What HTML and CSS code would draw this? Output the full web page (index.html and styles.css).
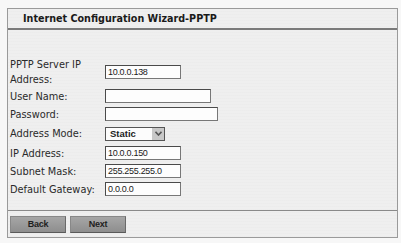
FILE: index.html
```html
<!DOCTYPE html>
<html>
<head>
<meta charset="utf-8">
<link rel="stylesheet" href="styles.css">
</head>
<body>
<div class="page">
  <div class="box">
    <div class="header">Internet Configuration Wizard-PPTP</div>
    <div class="form">
      <div class="row tall">
        <div class="label">PPTP Server IP<br>Address:</div>
        <div class="field"><span class="input w76">10.0.0.138</span></div>
      </div>
      <div class="row">
        <div class="label">User Name:</div>
        <div class="field"><span class="input w106"></span></div>
      </div>
      <div class="row">
        <div class="label">Password:</div>
        <div class="field"><span class="input w113"></span></div>
      </div>
      <div class="row sel">
        <div class="label">Address Mode:</div>
        <div class="field"><span class="select"><span class="sel-text">Static</span><span class="sel-btn"><svg width="7" height="5" viewBox="0 0 7 5"><path d="M0.5 0.8 L3.5 4 L6.5 0.8" fill="none" stroke="#555" stroke-width="1.6"/></svg></span></span></div>
      </div>
      <div class="row">
        <div class="label">IP Address:</div>
        <div class="field"><span class="input w76">10.0.0.150</span></div>
      </div>
      <div class="row">
        <div class="label">Subnet Mask:</div>
        <div class="field"><span class="input w76">255.255.255.0</span></div>
      </div>
      <div class="row">
        <div class="label">Default Gateway:</div>
        <div class="field"><span class="input w76">0.0.0.0</span></div>
      </div>
    </div>
    <div class="footer">
      <span class="btn">Back</span>
      <span class="btn">Next</span>
    </div>
  </div>
</div>
</body>
</html>
```
FILE: styles.css
```css
html, body {
  margin: 0;
  padding: 0;
  background: #f7f7f7;
}
.page {
  padding: 8px 3px 5px 7px;
}
.box {
  width: 389px;
  height: 228px;
  border: 1px solid #9a9a9a;
  background: repeating-linear-gradient(180deg, #efefef 0px, #efefef 2px, #eaeaea 3px);
  display: flex;
  flex-direction: column;
  font-family: "DejaVu Sans", Verdana, sans-serif;
  color: #2a2a2a;
}
.header {
  height: 19px;
  line-height: 20px;
  padding-left: 15px;
  font-weight: bold;
  font-size: 9.6px;
  color: #1a1a1a;
  border-bottom: 2px solid #7a7a7a;
}
.form {
  padding-top: 27px;
  padding-left: 2px;
  flex: 1;
  border-bottom: 1px solid #8a8a8a;
}
.row {
  display: grid;
  grid-template-columns: 95px auto;
  align-items: center;
  height: 18px;
  font-size: 9.8px;
}
.row.tall {
  height: 30px;
}
.row.sel {
  height: 21px;
}
.label {
  line-height: 15px;
  white-space: nowrap;
}
.field {
  display: flex;
  align-items: center;
}
.input {
  display: inline-block;
  box-sizing: border-box;
  height: 14px;
  border: 1px solid #4a4a4a;
  border-right-color: #777;
  border-bottom-color: #777;
  background: #fdfdfd;
  font-family: "Liberation Sans", Arial, sans-serif;
  font-size: 9px;
  letter-spacing: -0.3px;
  line-height: 12px;
  padding-left: 2px;
  color: #1a1a1a;
}
.w76 { width: 76px; }
.w106 { width: 106px; }
.w113 { width: 113px; }
.select {
  display: inline-flex;
  box-sizing: border-box;
  width: 60px;
  height: 14px;
  border: 1px solid #555;
  background: #fcfcfc;
  align-items: center;
  justify-content: space-between;
}
.sel-text {
  font-family: "Liberation Sans", Arial, sans-serif;
  font-weight: bold;
  font-size: 9.5px;
  padding-left: 4px;
  color: #222;
}
.sel-btn {
  width: 12px;
  height: 12px;
  background: #c8c8c8;
  display: flex;
  align-items: center;
  justify-content: center;
}
.footer {
  height: 26px;
  display: flex;
  align-items: flex-start;
  gap: 4px;
  padding-left: 2px;
  padding-top: 5px;
  box-sizing: border-box;
}
.btn {
  box-sizing: border-box;
  width: 56px;
  height: 17px;
  background: linear-gradient(180deg, #a6a6a6, #8e8e8e);
  border: 1px solid #888;
  border-bottom-color: #5a5a5a;
  border-right-color: #6a6a6a;
  text-align: center;
  font-family: "Liberation Sans", Arial, sans-serif;
  font-weight: bold;
  font-size: 9px;
  line-height: 15px;
  letter-spacing: -0.3px;
  color: #1e1e1e;
}
```
